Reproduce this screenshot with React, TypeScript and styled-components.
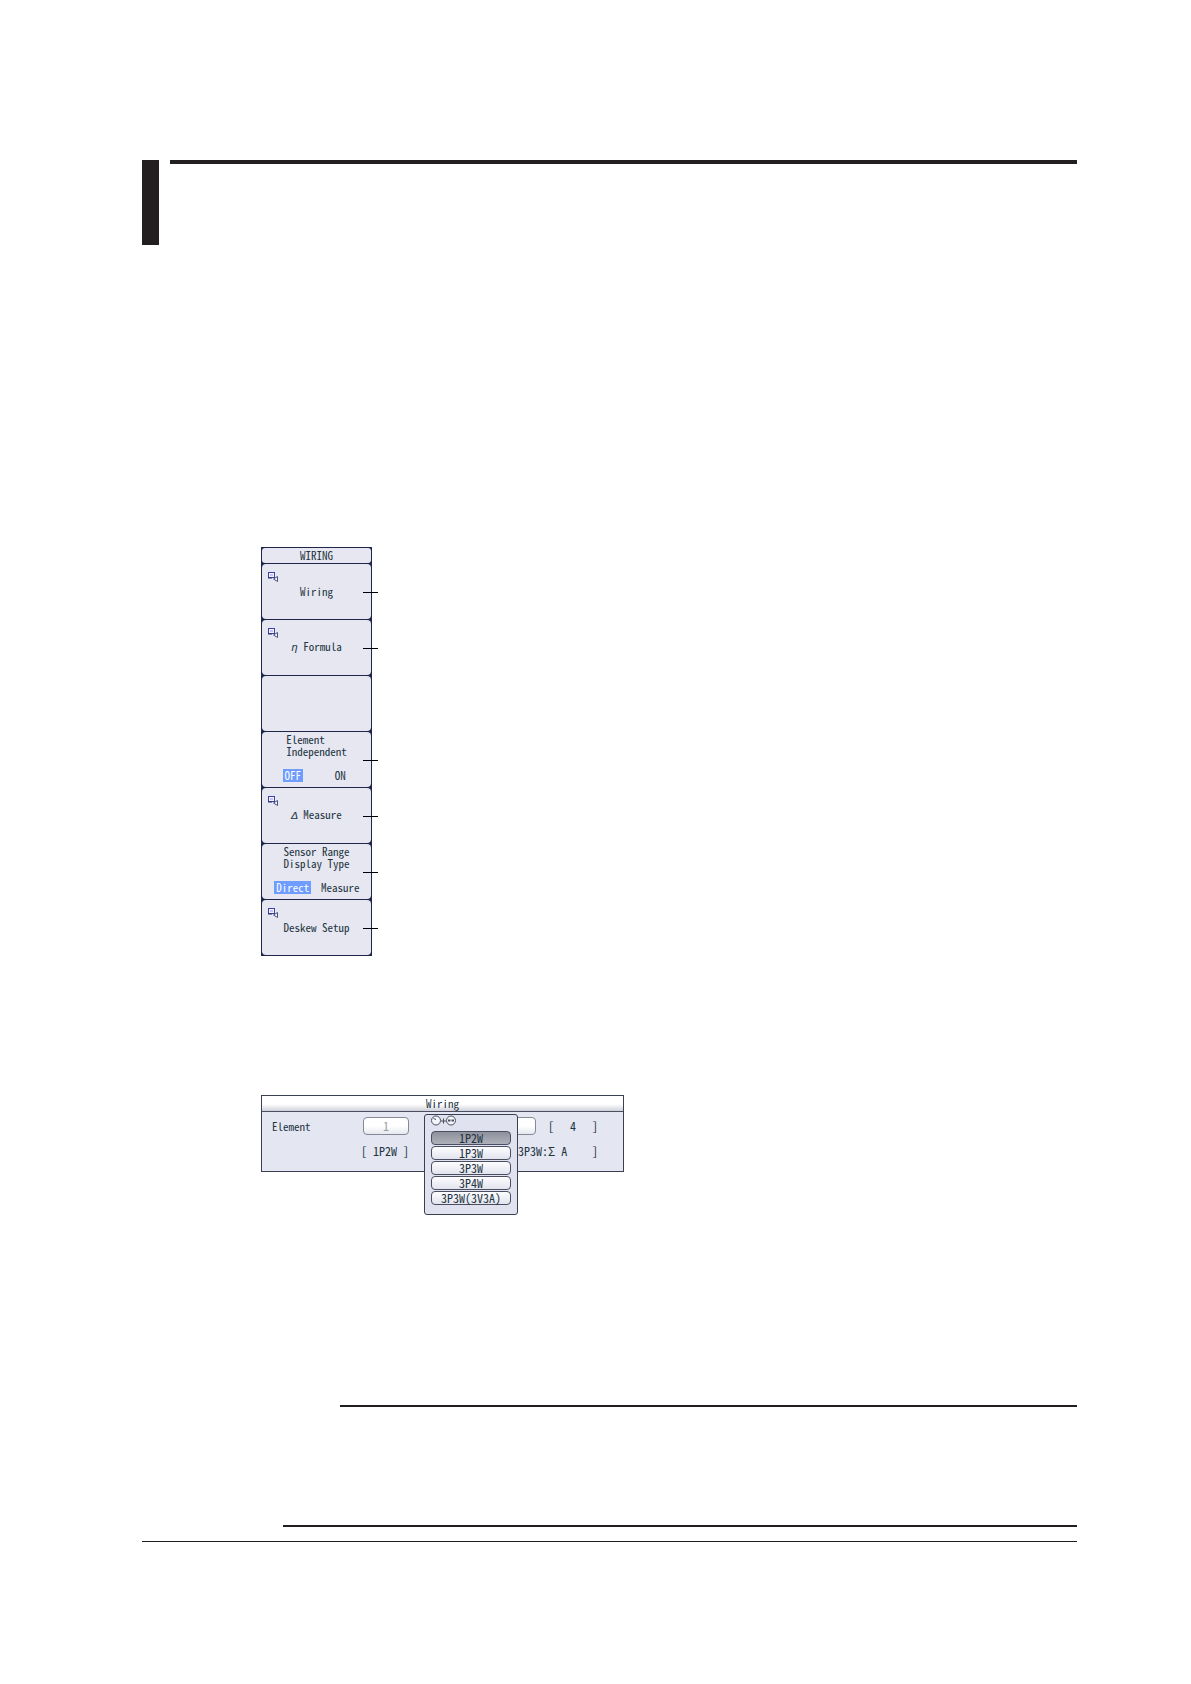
import React, { useState } from "react";
import styled, { createGlobalStyle, css } from "styled-components";

const ink = "#231f20";
const frame = "#20264a";
const panel = "#e6e7f0";
const label = "#223341";
const highlight = "#6f9cff";

const GlobalStyle = createGlobalStyle`
  *, *::before, *::after { box-sizing: border-box; }
  body {
    margin: 0;
    background: #fff;
    color: ${label};
    font-family: "Noto Sans Mono CJK JP", "Noto Sans CJK JP", "Liberation Sans", sans-serif;
  }
  button, input { font: inherit; color: inherit; }
`;

const Page = styled.main`
  padding: 160px 114px 142px 142px;
`;

const ChapterHead = styled.header`
  display: grid;
  grid-template-columns: 17px 1fr;
  gap: 11px;
`;

const ChapterBar = styled.div`
  height: 85px;
  background: ${ink};
`;

const Rule = styled.hr<{ $weight: number; $indent?: number }>`
  height: ${(p) => p.$weight}px;
  margin: 0 0 0 ${(p) => p.$indent ?? 0}px;
  border: 0;
  background: ${ink};
`;

const Figure = styled.figure<{ $space: number }>`
  display: flex;
  margin: ${(p) => p.$space}px 0 0 119px;
`;

const Note = styled.section`
  display: grid;
  gap: 118px;
  margin: 233px 0 14px;
`;

const Menu = styled.nav`
  display: grid;
  gap: 1px;
  width: 111px;
  padding: 1px;
  background: ${frame};
  font-size: 11px;
  line-height: 12px;
`;

const MenuTitle = styled.h2`
  margin: 0;
  border-radius: 3px;
  background: ${panel};
  font: inherit;
  line-height: 15px;
  text-align: center;
`;

const cell = css`
  position: relative;
  height: 55px;
  border: 0;
  border-radius: 4px;
  background: ${panel};
`;

const SoftKey = styled.button`
  ${cell}
  padding: 0 0 2px;
  text-align: center;
  white-space: pre;
`;

const BlankKey = styled.div`
  ${cell}
`;

const ToggleKey = styled.div`
  ${cell}
  display: flex;
  flex-direction: column;
  align-items: center;
  justify-content: space-between;
  padding: 1px 7px 5px;
`;

const ToggleName = styled.span`
  white-space: pre-line;
`;

const Options = styled.div`
  display: grid;
  grid-template-columns: 1fr 1fr;
  justify-items: center;
  align-self: stretch;
`;

const Option = styled.label<{ $on: boolean }>`
  padding: 0 2px;
  line-height: 13px;
  color: ${(p) => (p.$on ? "#fff" : label)};
  background: ${(p) => (p.$on ? highlight : "transparent")};
`;

const HiddenRadio = styled.input`
  position: absolute;
  opacity: 0;
  pointer-events: none;
`;

const Leader = styled.span`
  position: absolute;
  top: 28px;
  right: -7px;
  width: 15px;
  height: 1px;
  background: #000;
`;

const Corner = styled.svg`
  position: absolute;
  top: 7px;
  left: 5px;
`;

const Symbol = styled.i`
  font-family: "Liberation Mono", monospace;
  line-height: 1;
`;

const Dialog = styled.section`
  position: relative;
  width: 363px;
  border: 1px solid #3b3f52;
  background: #e4e6f1;
  font-size: 12px;
  line-height: 16px;
`;

const DialogTitle = styled.h2`
  margin: 0;
  border-bottom: 1px solid #4a4e5e;
  background: linear-gradient(#fff 55%, #cfd1da);
  font-size: 11px;
  font-weight: 400;
  line-height: 15px;
  text-align: center;
`;

const Fields = styled.div`
  display: grid;
  grid-template-columns: 89px 127px 46px 1fr;
  align-items: center;
  row-gap: 8px;
  padding: 5px 25px 12px 10px;
`;

const FieldName = styled.span`
  font-size: 11px;
`;

const Assigned = styled.span`
  grid-column: 2;
  white-space: pre;
`;

const Bracketed = styled.span<{ $wide?: boolean }>`
  grid-column: ${(p) => (p.$wide ? "3 / 5" : "4")};
  display: flex;
  justify-content: space-between;
  padding-left: ${(p) => (p.$wide ? 30 : 14)}px;
`;

const ElementButton = styled.button`
  width: 46px;
  height: 18px;
  margin-left: 2px;
  padding: 0;
  border: 1px solid #858997;
  border-radius: 4px;
  background: linear-gradient(#fff 50%, #e6e8ee);
  color: #9a9daa;
  line-height: 14px;
`;

const Popup = styled.div`
  position: absolute;
  top: 18px;
  left: 162px;
  display: flex;
  flex-direction: column;
  gap: 3px;
  width: 94px;
  height: 101px;
  padding: 0 6px;
  border: 1px solid #3b3f52;
  border-radius: 3px;
  background: #e0e3ef;
`;

const Choices = styled.div`
  display: grid;
  gap: 1px;
`;

const Choice = styled.button<{ $on: boolean }>`
  height: 14px;
  padding: 0;
  border: 1px solid #4a4e60;
  border-radius: 4px;
  background: ${(p) =>
    p.$on ? "linear-gradient(#8e909b, #aeb0ba)" : "linear-gradient(#fdfdff, #e2e4ee)"};
  line-height: 12px;
`;

const MenuIcon = () => (
  <Corner width="13" height="13" viewBox="0 0 13 13" fill="none" aria-hidden="true">
    <rect x="1.500" y="1.500" width="6" height="5" fill="#f2f2fb" stroke="#3f3fa8" />
    <path d="M3 4h3" stroke="#9a9ad8" />
    <path d="M1 7h4" stroke="#2d2d80" />
    <path d="M10.500 5.500v5l-4-2.500z" fill="#f2f2fb" stroke="#50547c" />
  </Corner>
);

const KnobIcon = () => (
  <svg width="30" height="13" viewBox="4 1 30 13" fill="none" stroke="#4a4e5e" aria-hidden="true">
    <circle cx="9" cy="6.500" r="4.500" fill="#f4f5fa" />
    <path d="M6.500 4.500l2.500 1" />
    <path d="M14 7h5M16.500 4.500v5" />
    <circle cx="24" cy="6.500" r="4.500" fill="#f4f5fa" />
    <path d="M21 6.500h2.500M24.500 6.500h2.500" strokeWidth="2" />
  </svg>
);

type ToggleProps = { name: string; group: string; options: string[] };

function Toggle({ name, group, options }: ToggleProps) {
  const [value, setValue] = useState(options[0]);
  return (
    <ToggleKey role="radiogroup" aria-labelledby={group}>
      <ToggleName id={group}>{name}</ToggleName>
      <Options>
        {options.map((o) => (
          <Option key={o} $on={o === value}>
            <HiddenRadio type="radio" name={group} checked={o === value} onChange={() => setValue(o)} />
            {o}
          </Option>
        ))}
      </Options>
      <Leader />
    </ToggleKey>
  );
}

function Key({ children }: { children: React.ReactNode }) {
  return (
    <SoftKey type="button">
      <MenuIcon />
      {children}
      <Leader />
    </SoftKey>
  );
}

const wirings = ["1P2W", "1P3W", "3P3W", "3P4W", "3P3W(3V3A)"];

export default function App() {
  const [wiring, setWiring] = useState(wirings[0]);
  return (
    <Page>
      <GlobalStyle />
      <ChapterHead>
        <ChapterBar />
        <Rule $weight={4} />
      </ChapterHead>

      <Figure $space={302}>
        <Menu>
          <MenuTitle>WIRING</MenuTitle>
          <Key>Wiring</Key>
          <Key><Symbol>η</Symbol> Formula</Key>
          <BlankKey />
          <Toggle name={"Element\nIndependent"} group="independent" options={["OFF", "ON"]} />
          <Key><Symbol>Δ</Symbol> Measure</Key>
          <Toggle name={"Sensor Range\nDisplay Type"} group="sensor" options={["Direct", "Measure"]} />
          <Key>Deskew Setup</Key>
        </Menu>
      </Figure>

      <Figure $space={139}>
        <Dialog>
          <DialogTitle>Wiring</DialogTitle>
          <Fields>
            <FieldName>Element</FieldName>
            <ElementButton type="button">1</ElementButton>
            <ElementButton type="button" aria-label="Element group" />
            <Bracketed>
              <span>[</span>
              <span>4</span>
              <span>]</span>
            </Bracketed>
            <Assigned>[ 1P2W ]</Assigned>
            <Bracketed $wide>
              <span>3P3W:Σ A</span>
              <span>]</span>
            </Bracketed>
          </Fields>
          <Popup>
            <KnobIcon />
            <Choices>
              {wirings.map((w) => (
                <Choice key={w} type="button" $on={w === wiring} onClick={() => setWiring(w)}>
                  {w}
                </Choice>
              ))}
            </Choices>
          </Popup>
        </Dialog>
      </Figure>

      <Note>
        <Rule $weight={2} $indent={198} />
        <Rule $weight={2} $indent={141} />
      </Note>
      <Rule $weight={1} />
    </Page>
  );
}
